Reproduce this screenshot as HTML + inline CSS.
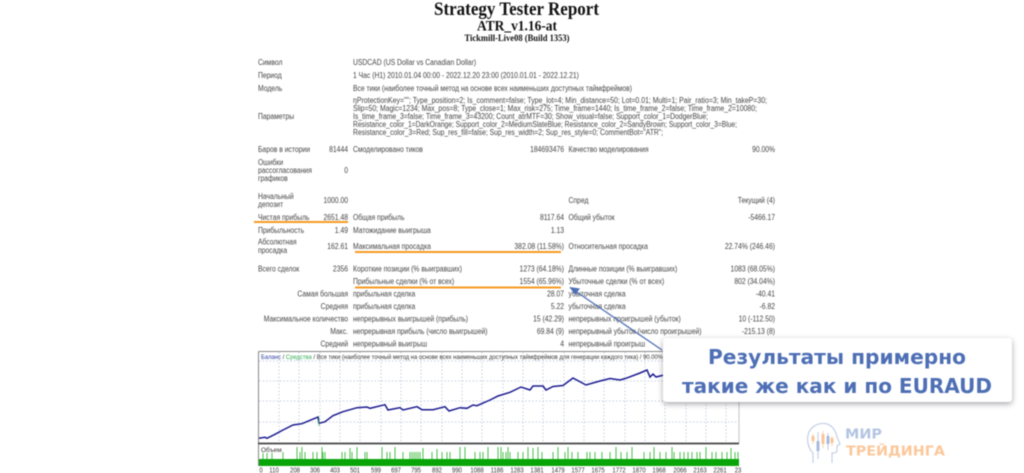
<!DOCTYPE html>
<html><head><meta charset="utf-8"><style>
html,body{margin:0;padding:0;background:#fff;width:1024px;height:473px;overflow:hidden}
svg{display:block;position:absolute;left:0;top:0}
.t{font-family:"Liberation Sans",sans-serif;font-size:7.8px;fill:#444;transform-box:fill-box;transform-origin:left center;transform:scaleX(.87)}
.r{text-anchor:end;transform-origin:right center}
.f{transform:none}
.h{font-family:"Liberation Serif",serif;font-weight:bold;fill:#111;text-anchor:middle}
.soft{filter:blur(.45px)}
.x{font-family:"Liberation Sans",sans-serif;font-size:7px;fill:#333;text-anchor:middle;transform-box:fill-box;transform-origin:center;transform:scaleX(.85)}
</style></head><body>
<svg width="1024" height="473" viewBox="0 0 1024 473" xmlns="http://www.w3.org/2000/svg">
<g class="soft">
<text class="h" x="516.5" y="15" font-size="19" textLength="165" lengthAdjust="spacingAndGlyphs">Strategy Tester Report</text>
<text class="h" x="517" y="30.500" font-size="14.5" textLength="80" lengthAdjust="spacingAndGlyphs">ATR_v1.16-at</text>
<text class="h" x="517" y="41" font-size="9" textLength="105" lengthAdjust="spacingAndGlyphs">Tickmill-Live08 (Build 1353)</text>

<text class="t" x="258" y="65">Символ</text>
<text class="t" x="353" y="65">USDCAD (US Dollar vs Canadian Dollar)</text>
<text class="t" x="258" y="78">Период</text>
<text class="t" x="353" y="78">1 Час (H1) 2010.01.04 00:00 - 2022.12.20 23:00 (2010.01.01 - 2022.12.21)</text>
<text class="t" x="258" y="91">Модель</text>
<text class="t f" x="353" y="91" textLength="279" lengthAdjust="spacingAndGlyphs">Все тики (наиболее точный метод на основе всех наименьших доступных таймфреймов)</text>

<text class="t" x="258" y="119">Параметры</text>
<text class="t f" x="353" y="103" textLength="414" lengthAdjust="spacingAndGlyphs">ηProtectionKey=""; Type_position=2; Is_comment=false; Type_lot=4; Min_distance=50; Lot=0.01; Multi=1; Pair_ratio=3; Min_takeP=30;</text>
<text class="t f" x="353" y="111" textLength="404" lengthAdjust="spacingAndGlyphs">Slip=50; Magic=1234; Max_pos=8; Type_close=1; Max_risk=275; Time_frame=1440; Is_time_frame_2=false; Time_frame_2=10080;</text>
<text class="t f" x="353" y="119" textLength="355" lengthAdjust="spacingAndGlyphs">Is_time_frame_3=false; Time_frame_3=43200; Count_atrMTF=30; Show_visual=false; Support_color_1=DodgerBlue;</text>
<text class="t f" x="353" y="127" textLength="384" lengthAdjust="spacingAndGlyphs">Resistance_color_1=DarkOrange; Support_color_2=MediumSlateBlue; Resistance_color_2=SandyBrown; Support_color_3=Blue;</text>
<text class="t f" x="353" y="135" textLength="310" lengthAdjust="spacingAndGlyphs">Resistance_color_3=Red; Sup_res_fill=false; Sup_res_width=2; Sup_res_style=0; CommentBot="ATR";</text>

<text class="t" x="258" y="152">Баров в истории</text>
<text class="t r" x="348" y="152">81444</text>
<text class="t" x="353" y="152">Смоделировано тиков</text>
<text class="t r" x="564" y="152">184693476</text>
<text class="t" x="568.5" y="152">Качество моделирования</text>
<text class="t r" x="775" y="152">90.00%</text>

<text class="t" x="258" y="165">Ошибки</text>
<text class="t" x="258" y="173">рассогласования</text>
<text class="t" x="258" y="181">графиков</text>
<text class="t r" x="348" y="173">0</text>

<text class="t" x="258" y="199">Начальный</text>
<text class="t" x="258" y="207">депозит</text>
<text class="t r" x="348" y="203">1000.00</text>
<text class="t" x="568.5" y="203">Спред</text>
<text class="t r" x="775" y="203">Текущий (4)</text>

<text class="t" x="258" y="220">Чистая прибыль</text>
<text class="t r" x="348" y="220">2651.48</text>
<text class="t" x="353" y="220">Общая прибыль</text>
<text class="t r" x="564" y="220">8117.64</text>
<text class="t" x="568.5" y="220">Общий убыток</text>
<text class="t r" x="775" y="220">-5466.17</text>

<text class="t" x="258" y="233">Прибыльность</text>
<text class="t r" x="348" y="233">1.49</text>
<text class="t" x="353" y="233">Матожидание выигрыша</text>
<text class="t r" x="564" y="233">1.13</text>

<text class="t" x="258" y="244.500">Абсолютная</text>
<text class="t" x="258" y="253">просадка</text>
<text class="t r" x="348" y="249">162.61</text>
<text class="t" x="353" y="249">Максимальная просадка</text>
<text class="t r" x="564" y="249">382.08 (11.58%)</text>
<text class="t" x="568.5" y="249">Относительная просадка</text>
<text class="t r" x="775" y="249">22.74% (246.46)</text>

<text class="t" x="258" y="271.500">Всего сделок</text>
<text class="t r" x="348" y="271.500">2356</text>
<text class="t" x="353" y="271.500">Короткие позиции (% выигравших)</text>
<text class="t r" x="564" y="271.500">1273 (64.18%)</text>
<text class="t" x="568.500" y="271.500">Длинные позиции (% выигравших)</text>
<text class="t r" x="775" y="271.500">1083 (68.05%)</text>

<text class="t" x="353" y="284">Прибыльные сделки (% от всех)</text>
<text class="t r" x="564" y="284">1554 (65.96%)</text>
<text class="t" x="568.500" y="284">Убыточные сделки (% от всех)</text>
<text class="t r" x="775" y="284">802 (34.04%)</text>

<text class="t r" x="348" y="296.500">Самая большая</text>
<text class="t" x="353" y="296.500">прибыльная сделка</text>
<text class="t r" x="564" y="296.500">28.07</text>
<text class="t" x="568.500" y="296.500">убыточная сделка</text>
<text class="t r" x="775" y="296.500">-40.41</text>

<text class="t r" x="348" y="309">Средняя</text>
<text class="t" x="353" y="309">прибыльная сделка</text>
<text class="t r" x="564" y="309">5.22</text>
<text class="t" x="568.500" y="309">убыточная сделка</text>
<text class="t r" x="775" y="309">-6.82</text>

<text class="t r" x="348" y="321.500">Максимальное количество</text>
<text class="t" x="353" y="321.500">непрерывных выигрышей (прибыль)</text>
<text class="t r" x="564" y="321.500">15 (42.29)</text>
<text class="t" x="568.500" y="321.500">непрерывных проигрышей (убыток)</text>
<text class="t r" x="775" y="321.500">10 (-112.50)</text>

<text class="t r" x="348" y="334">Макс.</text>
<text class="t" x="353" y="334">непрерывная прибыль (число выигрышей)</text>
<text class="t r" x="564" y="334">69.84 (9)</text>
<text class="t" x="568.500" y="334">непрерывный убыток (число проигрышей)</text>
<text class="t r" x="775" y="334">-215.13 (8)</text>

<text class="t r" x="348" y="346.500">Средний</text>
<text class="t" x="353" y="346.500">непрерывный выигрыш</text>
<text class="t r" x="564" y="346.500">4</text>
<text class="t" x="568.500" y="346.500">непрерывный проигрыш</text>

<!-- orange underlines -->
<path d="M254 222H348M355 252H561M355 287.500H561" stroke="#f59a23" stroke-width="2" fill="none"/>

<!-- chart -->
<path d="M258.500 351.500H739M258.500 351.500V466" fill="none" stroke="#888" stroke-width="1"/>
<path d="M739 351.500V443" fill="none" stroke="#c4c4c4" stroke-width="1"/>
<g stroke="#c6d0e2" stroke-width="1" stroke-dasharray="1.500 2" fill="none">
<path d="M259 361H739M259 381H739M259 401H739M259 422H739"/>
<path d="M279 352V443M299 352V443M320 352V443M340 352V443M360 352V443M381 352V443M401 352V443M421 352V443M442 352V443M462 352V443M482 352V443M503 352V443M523 352V443M543 352V443M564 352V443M584 352V443M604 352V443M625 352V443M645 352V443M665 352V443M686 352V443M706 352V443M726 352V443"/>
</g>
<text x="261" y="359" font-family="Liberation Sans,sans-serif" font-size="6.800" fill="#333" textLength="402" lengthAdjust="spacingAndGlyphs"><tspan fill="#2a3fa0">Баланс</tspan> / <tspan fill="#2fae55">Средства</tspan> / Все тики (наиболее точный метод на основе всех наименьших доступных таймфреймов для генерации каждого тика) / 90.00%</text>
<path d="M259 438.300L265 437.300L267 438.300L275 434.300L283 430L293 425L302 423.700L310 420.300L318 417L319 423.300L325 421.700L333 415.700L343 411.700L357 407.700L367 407L370 408.300L385 404.700L388 410L400 407.700L403 410L417 406.700L422 409.700L433 409.700L445 406.700L449 411L460 407.700L467 408.300L473 405L477 405.700L490 400L498 396L510 392.300L521 387L530 390L533 386L543 386 546 390L553 386.500L563 385.500L573 378L586 385L600 381L610 378.500L620 380L626 378.300L640 373L647 370L650 377L653 374L656 377L664 375L672 372" fill="none" stroke="#1c1c90" stroke-width="1.500"/>
<path d="M319 417V426" stroke="#2fae55" stroke-width=".7"/>

<path d="M258 443.500H739" stroke="#444" stroke-width="1.700"/>
<path d="M263 459V453M267 459V453M272 459V453M283 459V452M297 459V447M300 459V452M302 459V447M305 459V452M313 459V452M317 459V452M322 459V447M323 459V452M325 459V452M342 459V452M345 459V452M350 459V448M352 459V452M357 459V447M365 459V452M367 459V452M382 459V447M387 459V452M390 459V452M395 459V447M403 459V452M410 459V452M412 459V452M414 459V452M416 459V452M418 459V452M420 459V452M423 459V448M432 459V452M437 459V449M442 459V452M447 459V452M450 459V452M460 459V447M465 459V447M475 459V452M480 459V452M483 459V452M488 459V447M498 459V447M503 459V452M508 459V447M501 459V447M503 459V452M506 459V452M510 459V452M518 459V452M523 459V452M528 459V447M533 459V448M538 459V447M542 459V452M553 459V452M558 459V447M565 459V452M568 459V447M572 459V452M578 459V452M587 459V452M590 459V452M595 459V452M602 459V452M610 459V452M616 459V447M621 459V452M627 459V452M632 459V447M644 459V452M650 459V452M654 459V447M660 459V452M666 459V452M672 459V447M674 459V452M680 459V452M684 459V452M688 459V452M692 459V452M697 459V452M700 459V452M706 459V447M712 459V452M716 459V452M722 459V452M727 459V452M731 459V448M735 459V452M738 459V452" stroke="#4cc04c" stroke-width="1" fill="none"/>
<rect x="259" y="459" width="480" height="7" fill="#08a508"/>
<text x="261" y="452" font-family="Liberation Sans,sans-serif" font-size="6.500" fill="#333">Объем</text>
<g>
<text class="x" x="261" y="472.500">0</text><text class="x" x="274" y="472.500">110</text><text class="x" x="295" y="472.500">208</text><text class="x" x="315" y="472.500">306</text><text class="x" x="335" y="472.500">403</text><text class="x" x="355" y="472.500">501</text><text class="x" x="376" y="472.500">599</text><text class="x" x="396" y="472.500">697</text><text class="x" x="416" y="472.500">795</text><text class="x" x="437" y="472.500">892</text><text class="x" x="457" y="472.500">990</text><text class="x" x="477" y="472.500">1088</text><text class="x" x="497" y="472.500">1186</text><text class="x" x="517" y="472.500">1283</text><text class="x" x="537" y="472.500">1381</text><text class="x" x="558" y="472.500">1479</text><text class="x" x="578" y="472.500">1577</text><text class="x" x="598" y="472.500">1675</text><text class="x" x="619" y="472.500">1772</text><text class="x" x="639" y="472.500">1870</text><text class="x" x="659" y="472.500">1968</text><text class="x" x="680" y="472.500">2066</text><text class="x" x="700" y="472.500">2163</text><text class="x" x="720" y="472.500">2261</text><text class="x" x="738" y="472.500">23</text>
</g>

<!-- arrow -->
<path d="M570 287.500L662 350" stroke="#4e6fb5" stroke-width="1.300" fill="none"/>
<path d="M569.500 287L580 288.500L575 295Z" fill="#4e6fb5"/>

<!-- callout -->
<rect x="663" y="338" width="349" height="64" rx="3" fill="#fff" style="filter:drop-shadow(0 2px 3px rgba(60,60,70,.45))"/>
<g font-family="DejaVu Sans,sans-serif" font-weight="bold" fill="#4e6fb5" font-size="20.500">
<text x="708" y="364" textLength="258" lengthAdjust="spacingAndGlyphs">Результаты примерно</text>
<text x="682" y="393" textLength="310" lengthAdjust="spacingAndGlyphs">такие же как и по EURAUD</text>
</g>

<!-- logo -->
<g style="filter:blur(.3px)">
<path d="M813 463V453C808 448 807 441 808 435C810 427 817 423 825 423.500C832 424.500 836 431 837 437L840 444L837 446V450C837 453 835 453 832 453L832 463" fill="none" stroke="#c3cfe6" stroke-width="1.200"/>
<path d="M813 434V444M823 431V448M832 436V446" stroke="#fbc697" stroke-width=".8"/>
<path d="M818 432V459M828 433V450" stroke="#a9bbdd" stroke-width=".8"/>
<rect x="811.500" y="436" width="3" height="5" fill="#fbc697"/>
<rect x="816.500" y="441" width="3" height="10" fill="#a9bbdd"/>
<rect x="821.500" y="434" width="3" height="10" fill="#fbc697"/>
<rect x="826.500" y="436" width="3" height="8" fill="#a9bbdd"/>
<rect x="830.500" y="438" width="3" height="5" fill="#fbc697"/>
<text x="845" y="438.500" font-family="DejaVu Sans,sans-serif" font-weight="bold" font-size="13.500" fill="#b4c4e3" textLength="37" lengthAdjust="spacingAndGlyphs">МИР</text>
<text x="846" y="455.500" font-family="DejaVu Sans,sans-serif" font-weight="bold" font-size="13.500" fill="#fcc79a" textLength="99" lengthAdjust="spacingAndGlyphs">ТРЕЙДИНГА</text>
</g>
</g>
</svg>
</body></html>
